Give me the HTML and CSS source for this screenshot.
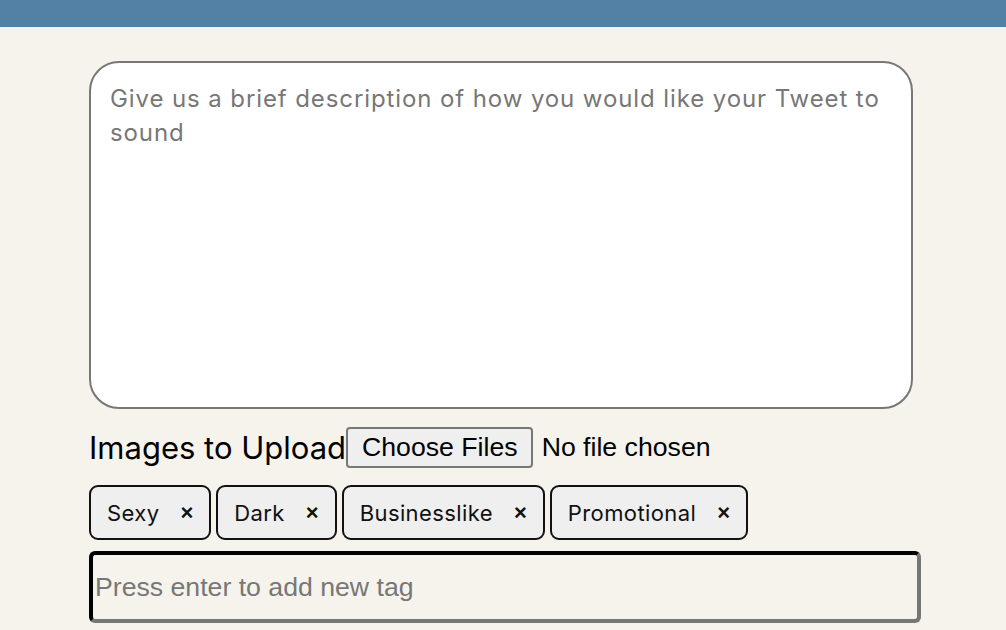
FILE: index.html
```html
<!DOCTYPE html>
<html>
<head>
<meta charset="utf-8">
<link rel="stylesheet" href="styles.css">
</head>
<body>
<header class="topbar"></header>
<main class="main">
  <textarea class="desc" placeholder="Give us a brief description of how you would like your Tweet to sound"></textarea>
  <div class="upload-row">
    <label class="upload-label">Images to Upload</label>
    <span class="file-btn">Choose Files</span>
    <span class="file-status">No file chosen</span>
  </div>
  <div class="tags">
    <span class="tag">Sexy<span class="x">×</span></span>
    <span class="tag">Dark<span class="x">×</span></span>
    <span class="tag">Businesslike<span class="x">×</span></span>
    <span class="tag">Promotional<span class="x">×</span></span>
  </div>
  <input class="tag-input" type="text" placeholder="Press enter to add new tag">
</main>
</body>
</html>
```
FILE: styles.css
```css
html, body {
  margin: 0;
  padding: 0;
  background: #f6f3ec;
  height: 100%;
  overflow: hidden;
}
.topbar {
  height: 27px;
  background: #5380a5;
}
.main {
  padding: 34px 0 0 89px;
  display: flex;
  flex-direction: column;
  align-items: flex-start;
}
.desc {
  box-sizing: border-box;
  width: 824px;
  height: 348px;
  margin: 0;
  border: 2px solid #777;
  border-radius: 30px;
  background: #fff;
  padding: 19px 19px;
  font-family: Inter, "Noto Sans", sans-serif;
  font-size: 24px;
  letter-spacing: 0.9px;
  line-height: 34px;
  color: #222;
  resize: none;
  outline: none;
}
.desc::placeholder {
  color: #777;
}
.upload-row {
  display: flex;
  align-items: center;
  margin-top: 18px;
  height: 40px;
}
.upload-label {
  font-family: Inter, "Noto Sans", sans-serif;
  font-size: 31px;
  color: #000;
}
.file-btn {
  box-sizing: border-box;
  height: 41px;
  padding: 0 13px 0 14px;
  display: flex;
  align-items: center;
  border: 2px solid #777;
  border-radius: 4px;
  background: #efefef;
  font-family: "Liberation Sans", Arial, sans-serif;
  font-size: 26.67px;
  color: #000;
}
.file-status {
  margin-left: 9px;
  font-family: "Liberation Sans", Arial, sans-serif;
  font-size: 26.67px;
  color: #000;
}
.tags {
  display: flex;
  gap: 5px;
  margin-top: 18px;
}
.tag {
  box-sizing: border-box;
  height: 55px;
  display: flex;
  align-items: center;
  padding: 0 16px 0 16px;
  border: 2px solid #111;
  border-radius: 9px;
  background: #efefef;
  font-family: Inter, "Noto Sans", sans-serif;
  font-size: 22px;
  letter-spacing: 0.4px;
  color: #111;
}
.x {
  margin-left: 21px;
  font-family: "Liberation Sans", Arial, sans-serif;
  font-weight: bold;
  font-size: 22px;
  letter-spacing: 0;
}
.tag-input {
  box-sizing: border-box;
  width: 832px;
  height: 72px;
  margin-top: 11px;
  padding: 0 2px;
  border: 4px inset #777;
  border-top-color: #222;
  border-left-color: #222;
  border-radius: 6px;
  background: transparent;
  font-family: "Liberation Sans", Arial, sans-serif;
  font-size: 26.67px;
  outline: none;
}
.tag-input::placeholder {
  color: #777;
}
```
